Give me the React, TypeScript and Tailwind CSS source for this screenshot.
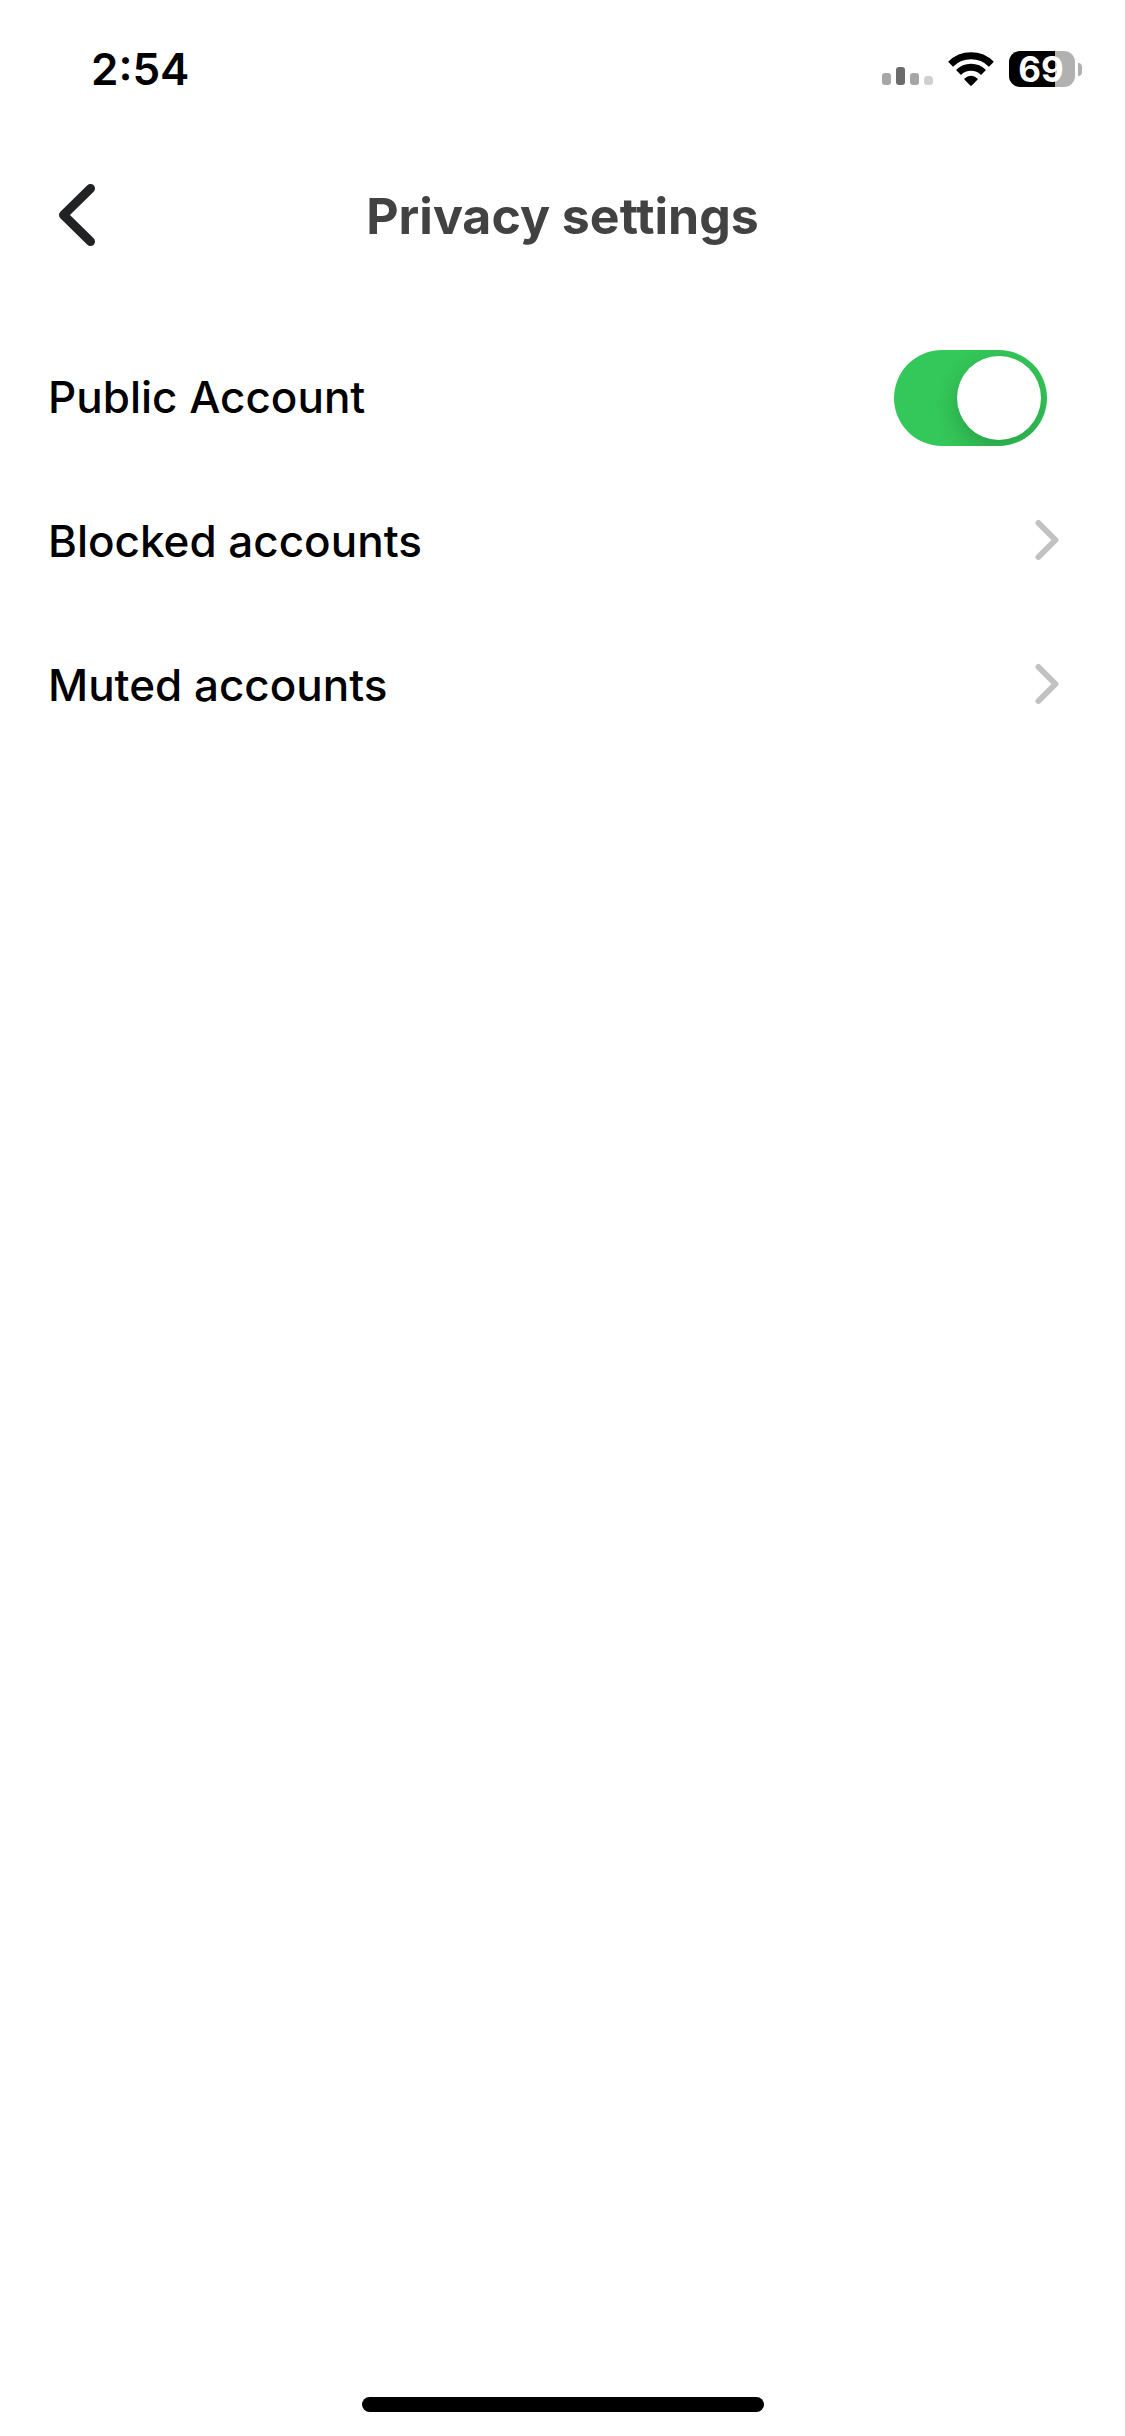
import { useState } from "react";

const links = ["Blocked accounts", "Muted accounts"];

function SignalIcon() {
  return (
    <svg viewBox="0 0 51 18" className="h-[18px] w-[51px]" aria-hidden="true">
      <rect x="0" y="6" width="9" height="12" rx="3" fill="#a6a6a6" />
      <rect x="14" y="0" width="9" height="18" rx="3" fill="#6b6b6b" />
      <rect x="28" y="6" width="9" height="12" rx="3" fill="#a6a6a6" />
      <rect x="42" y="9" width="9" height="9" rx="3.5" fill="#cfcfcf" />
    </svg>
  );
}

function WifiIcon() {
  return (
    <svg viewBox="0 0 46 34" className="h-[34px] w-[46px]" aria-hidden="true">
      <g fill="none" stroke="#000" strokeWidth="7">
        <path d="M2.6 12.2a29 29 0 0 1 40.8 0" />
        <path d="M10.5 20.4a17.7 17.7 0 0 1 25 0" />
      </g>
      <path
        d="M16.6 26.4a9.1 9.1 0 0 1 12.8 0q.7.7 0 1.4l-5.6 5.6q-.8.7-1.6 0l-5.6-5.6q-.7-.7 0-1.4z"
        fill="#000"
      />
    </svg>
  );
}

function Battery() {
  return (
    <div className="flex items-center gap-[3px]">
      <div className="flex h-9 w-[66px] items-center justify-center rounded-[11px] bg-linear-to-r from-black from-70% to-[#b1b1b1] to-70% pr-0.5 text-[35px] leading-9 font-bold text-white">
        69
      </div>
      <div className="h-[13px] w-1 rounded-r-full bg-[#b1b1b1]" />
    </div>
  );
}

function StatusBar() {
  return (
    <div className="flex h-[138px] items-center justify-between pr-[43px] pl-[91px]">
      <span className="text-[44px] leading-none font-semibold">2:54</span>
      <div className="flex items-center gap-[15px]">
        <div className="pt-[14px]">
          <SignalIcon />
        </div>
        <WifiIcon />
        <Battery />
      </div>
    </div>
  );
}

export default function App() {
  const [isPublic, setIsPublic] = useState(true);

  return (
    <div className="flex min-h-screen flex-col bg-white font-['Inter','Liberation_Sans',sans-serif] text-black">
      <StatusBar />
      <header className="grid h-[156px] grid-cols-[1fr_auto_1fr] items-center px-12">
        <button type="button" aria-label="Back" className="w-fit">
          <svg viewBox="0 0 60 72" className="h-[72px] w-[60px]" fill="none">
            <path
              d="M42.5 8.5 15.5 35 42.5 61.5"
              stroke="#212224"
              strokeWidth="9"
              strokeLinecap="round"
              strokeLinejoin="round"
            />
          </svg>
        </button>
        <h1 className="text-[50px] leading-none font-bold text-[#424242]">
          Privacy settings
        </h1>
      </header>
      <main className="pt-8 text-[44px] leading-none font-[450]">
        <label className="flex h-36 items-center justify-between px-12">
          <span className="pb-0.5">Public Account</span>
          <input
            type="checkbox"
            role="switch"
            checked={isPublic}
            onChange={(e) => setIsPublic(e.target.checked)}
            className="mr-[30px] flex h-24 w-[153px] appearance-none items-center overflow-hidden rounded-full bg-[#e9e9eb] p-1.5 before:size-[84px] before:rounded-full before:bg-white before:shadow-[0_9px_24px_rgba(0,0,0,0.2)] checked:justify-end checked:bg-[#34c759]"
          />
        </label>
        {links.map((label) => (
          <button
            key={label}
            type="button"
            className="flex h-36 w-full items-center justify-between px-12 text-left"
          >
            <span className="pb-0.5">{label}</span>
            <svg viewBox="0 0 60 60" className="size-[60px]" fill="none" aria-hidden="true">
              <path
                d="M21.5 11 38.5 28 21.5 45"
                stroke="#c2c2c2"
                strokeWidth="6"
                strokeLinecap="round"
                strokeLinejoin="round"
              />
            </svg>
          </button>
        ))}
      </main>
      <footer className="mt-auto flex justify-center pb-6">
        <div className="h-[15px] w-[402px] rounded-full bg-black" />
      </footer>
    </div>
  );
}
